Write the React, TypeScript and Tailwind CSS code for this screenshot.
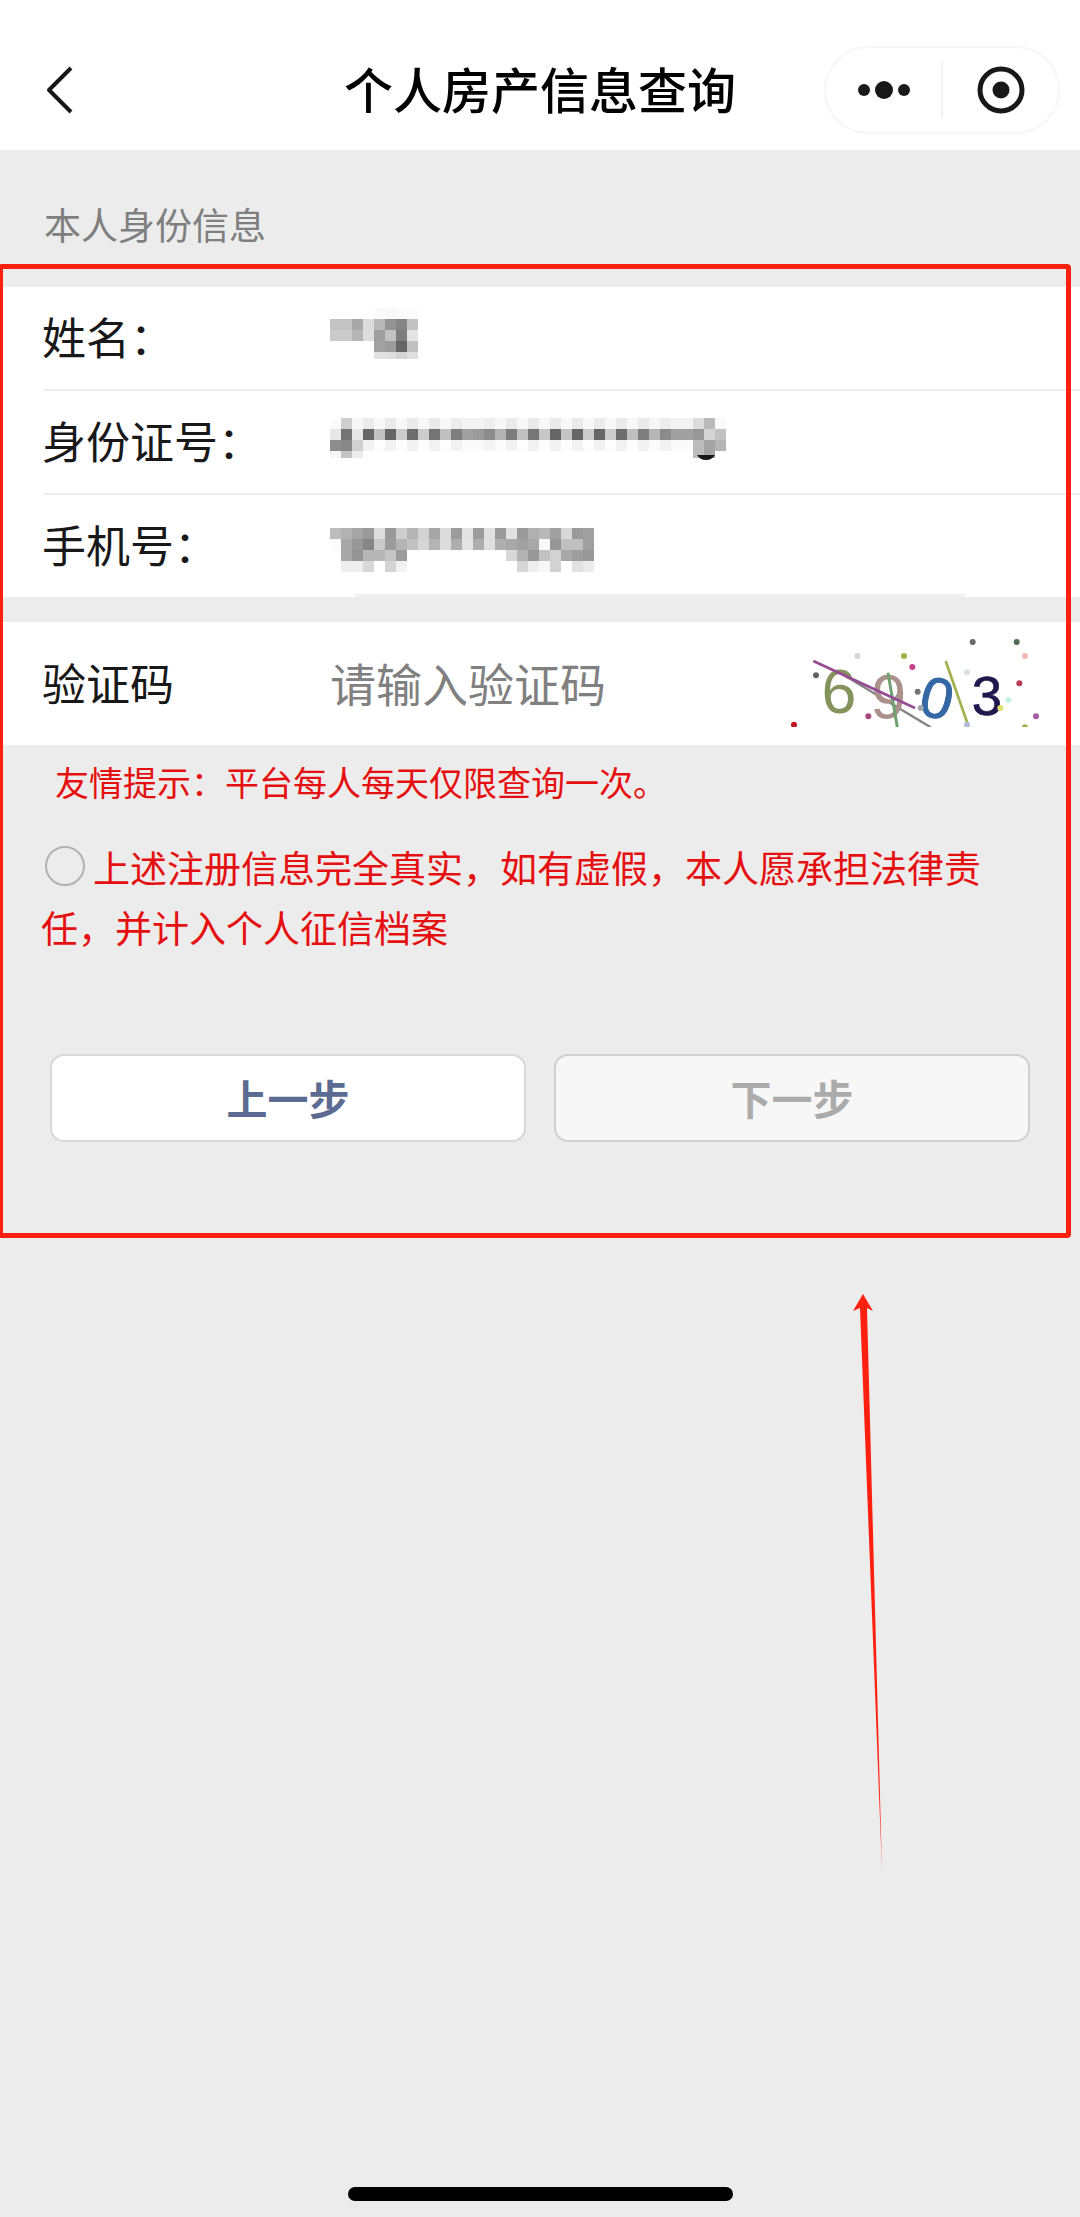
import { useState } from "react";

const CELL = 11;

// grey level of every mosaic block, row by row ("--" leaves the block empty)
const nameMask = [
  "-- -- -- -- fa f8 fb fb",
  "c3 c3 a8 dc b9 94 86 c2",
  "ca ca b5 dd 9e c2 7e e3",
  "-- -- -- -- a1 9b 66 c0",
  "-- -- -- -- e2 de d3 df",
];

const idMask = [
  "fb cf f7 ea f8 ea f8 ea f8 ea f8 ec f3 f3 ee f6 ea f8 ea f8 ea f8 ea f8 ea f8 ea f8 ea f6 ec f3 f3 dc ba fa",
  "e8 74 e6 66 c2 66 cc 6d cc 74 c0 7e a0 9a 8c b2 7c c0 76 c6 66 c4 66 cc 66 cc 6d bf 7e b6 8b a0 a0 98 d4 c2",
  "8e 88 d0 f2 fd f2 fd f2 fd f2 fd f2 fa fa f4 fc f2 fd f2 fd f2 fd f2 fd f2 fd f2 fd f2 fb f2 fa fa bc a4 b4",
  "f6 c4 ec -- -- -- -- -- -- -- -- -- -- -- -- -- -- -- -- -- -- -- -- -- -- -- -- -- -- -- -- -- -- bc a6 --",
];

const phoneMask = [
  "bc b2 a6 9a de 9a ce b4 d2 a6 dc 9c e3 9c e0 9a e2 9a b0 b8 a0 d8 9a a0",
  "fc a8 98 86 ca 9c b4 c2 d6 b4 dc ae e4 ae e0 ae a8 a0 a8 f8 96 c0 c0 a0",
  "-- a8 94 b6 b6 c6 9c -- -- -- -- -- -- -- -- -- d8 b2 98 c2 d2 a8 9e 98",
  "-- ee ee d8 -- d4 f2 -- -- -- -- -- -- -- -- -- -- d6 ee f8 d2 -- e2 ec",
];

const rows = [
  { label: "姓名：", mask: nameMask, top: 3, lastHeight: 7 },
  { label: "身份证号：", mask: idMask, top: 9, lastHeight: 7 },
  { label: "手机号：", mask: phoneMask, top: 15, lastHeight: 11 },
];

const captchaDots = [
  { x: 638, y: 186, color: "#666a6a" },
  { x: 770, y: 186, color: "#4f6a55" },
  { x: 292, y: 228, color: "#d3dad8" },
  { x: 432, y: 228, color: "#a3b03c" },
  { x: 795, y: 228, color: "#f6b9b0" },
  { x: 457, y: 261, color: "#c8418c" },
  { x: 621, y: 277, color: "#d8e2e0" },
  { x: 168, y: 286, color: "#5f6468" },
  { x: 778, y: 310, color: "#b83a5a" },
  { x: 473, y: 335, color: "#757575" },
  { x: 745, y: 359, color: "#c4f3e2" },
  { x: 482, y: 384, color: "#a6a6ac" },
  { x: 721, y: 384, color: "#e3e070" },
  { x: 325, y: 409, color: "#ad4a7c" },
  { x: 828, y: 409, color: "#a85aa6" },
  { x: 102, y: 434, color: "#c4141e" },
  { x: 621, y: 434, color: "#b0bcd4" },
  { x: 795, y: 442, color: "#a3b04f" },
];

function Mosaic({
  mask,
  top,
  lastHeight,
  children,
}: {
  mask: string[];
  top: number;
  lastHeight: number;
  children?: React.ReactNode;
}) {
  return (
    <svg width="400" height="66" aria-hidden="true" shapeRendering="crispEdges">
      {mask.map((line, r) =>
        line.split(" ").map((level, c) =>
          level === "--" ? null : (
            <rect
              key={`${r}-${c}`}
              x={c * CELL}
              y={top + r * CELL}
              width={CELL}
              height={r === mask.length - 1 ? lastHeight : CELL}
              fill={`#${level}${level}${level}`}
            />
          )
        )
      )}
      {children}
    </svg>
  );
}

function Captcha() {
  return (
    <svg
      width="258"
      height="87"
      viewBox="90 180 774 261"
      className="shrink-0 overflow-visible"
      fontFamily="'Liberation Sans', Arial, sans-serif"
      textAnchor="middle"
    >
      <clipPath id="captcha-area">
        <rect x="90" y="170" width="774" height="271" />
      </clipPath>
      <text x="237" y="400" fontSize="188" fill="#84945c">6</text>
      <line x1="235" y1="275" x2="512" y2="442" stroke="#858585" strokeWidth="7" clipPath="url(#captcha-area)" />
      <text x="386" y="415" fontSize="188" fill="#ab918c" transform="rotate(3 386 348)">9</text>
      <text x="531" y="414" fontSize="172" fill="#3468a4" stroke="#3468a4" strokeWidth="3" transform="rotate(14 531 356)">0</text>
      <text x="681" y="405" fontSize="164" fill="#1e184c" stroke="#1e184c" strokeWidth="2">3</text>
      <g clipPath="url(#captcha-area)">
        <line x1="384" y1="278" x2="412" y2="442" stroke="#6fa06f" strokeWidth="9" />
        <line x1="160" y1="243" x2="465" y2="384" stroke="#964a93" strokeWidth="8" />
        <line x1="557" y1="243" x2="623" y2="432" stroke="#a3b04f" strokeWidth="8" />
        {captchaDots.map((dot) => (
          <circle key={`${dot.x}-${dot.y}`} cx={dot.x} cy={dot.y} r="9" fill={dot.color} />
        ))}
      </g>
    </svg>
  );
}

export default function App() {
  const [code, setCode] = useState("");
  const [agreed, setAgreed] = useState(false);

  return (
    <div className="relative flex min-h-screen flex-col overflow-hidden bg-[#ececec] font-['Noto_Sans_CJK_SC',sans-serif] text-[#181818]">
      {/* ================= NAV BAR ================= */}
      <header className="grid h-[150px] grid-cols-[1fr_auto_1fr] items-center bg-white px-5 pt-[30px]">
        <button type="button" aria-label="返回" className="ml-6 justify-self-start">
          <svg width="32" height="50" viewBox="0 0 32 50" fill="none" stroke="#181818" strokeWidth="4">
            <path d="M27 3 L5 25 L27 47" strokeLinejoin="round" />
          </svg>
        </button>

        <h1 className="pb-1 text-[49px] leading-[60px] font-medium text-black">个人房产信息查询</h1>

        <div className="flex h-[88px] w-[236px] items-center justify-self-end rounded-full border-2 border-[#f6f6f6]">
          <button type="button" aria-label="更多" className="flex flex-1 justify-center">
            <svg width="52" height="20" viewBox="0 0 52 20" fill="#181818">
              <circle cx="6" cy="10" r="6" />
              <circle cx="26" cy="10" r="9" />
              <circle cx="46" cy="10" r="6" />
            </svg>
          </button>
          <div className="h-14 w-0.5 bg-[#f3f3f3]"></div>
          <button type="button" aria-label="关闭" className="flex flex-1 justify-center">
            <svg width="48" height="48" viewBox="0 0 48 48">
              <circle cx="24" cy="24" r="21" fill="none" stroke="#181818" strokeWidth="5" />
              <circle cx="24" cy="24" r="8.5" fill="#181818" />
            </svg>
          </button>
        </div>
      </header>

      <h2 className="px-11 pt-11 pb-2.5 text-[37px] leading-[60px] text-[#7f7f7f]">本人身份信息</h2>

      <main className="relative pt-[23px] pb-24">
        {/* ================= IDENTITY ================= */}
        <dl className="relative bg-white after:absolute after:right-[115px] after:bottom-0 after:left-[355px] after:h-[3px] after:bg-[#f0f0f0]">
          {rows.map((row) => (
            <div key={row.label} className="group">
              <div className="flex h-[102px] items-center pl-[42px]">
                <dt className="w-[288px] pb-1 text-[44px] leading-[60px]">{row.label}</dt>
                <dd>
                  <Mosaic mask={row.mask} top={row.top} lastHeight={row.lastHeight}>
                    {row.mask === idMask && (
                      <path d="M367 46 H385 Q382 51 376 51 Q370 51 367 46 Z" fill="#181818" shapeRendering="auto" />
                    )}
                  </Mosaic>
                </dd>
              </div>
              <div className="ml-11 h-0.5 bg-[#ececec] group-last:hidden"></div>
            </div>
          ))}
        </dl>

        {/* ================= CAPTCHA ================= */}
        <div className="mt-[25px] flex h-[123px] items-center bg-white pr-8 pl-[42px]">
          <label htmlFor="captcha" className="w-[288px] shrink-0 pb-1 text-[44px] leading-[60px]">
            验证码
          </label>
          <input
            id="captcha"
            type="text"
            value={code}
            onChange={(e) => setCode(e.target.value)}
            placeholder="请输入验证码"
            className="h-[72px] min-w-0 flex-1 pb-1 text-[46px] outline-none placeholder:text-[#808080]"
          />
          <Captcha />
        </div>

        {/* ================= AGREEMENT ================= */}
        <div className="px-[41px] pt-[7px] text-[#e60f0f]">
          <p className="pl-3.5 text-[34px] leading-[60px]">友情提示：平台每人每天仅限查询一次。</p>

          <label className="mt-[25px] block text-[37px] leading-[60px]">
            <input
              type="checkbox"
              checked={agreed}
              onChange={(e) => setAgreed(e.target.checked)}
              className="mr-2 ml-1 size-10 appearance-none rounded-full border-2 border-[#b2b2b2] align-[-3px] checked:border-[12px] checked:border-[#07c160]"
            />
            上述注册信息完全真实，如有虚假，本人愿承担法律责任，并计入个人征信档案
          </label>
        </div>

        {/* ================= ACTIONS ================= */}
        <div className="mt-[97px] grid grid-cols-2 gap-7 px-[50px]">
          <button
            type="button"
            className="h-[88px] rounded-[14px] border-2 border-[#d8d8d8] bg-white text-[41px] font-bold text-[#5b6b92]"
          >
            上一步
          </button>
          <button
            type="button"
            disabled={!agreed}
            className="h-[88px] rounded-[14px] border-2 border-[#d0d0d0] bg-white text-[41px] font-bold text-[#5b6b92] disabled:bg-[#f7f7f7] disabled:text-[#ababab]"
          >
            下一步
          </button>
        </div>

        {/* marker frame and arrow over the form */}
        <div className="pointer-events-none absolute inset-y-0 right-[9px] -left-0.5 rounded-[4px] border-[5px] border-[#ff2010]"></div>
        <svg
          width="30"
          height="580"
          viewBox="0 0 30 580"
          fill="#ff2010"
          aria-hidden="true"
          className="pointer-events-none absolute top-full right-[197px] mt-14"
        >
          <path d="M10 0 L20 17 L14 14 L29 577 L7 14 L0 17 Z" />
        </svg>
      </main>

      {/* home indicator */}
      <div className="mx-auto mt-auto mb-4 h-3.5 w-[385px] rounded-full bg-black"></div>
    </div>
  );
}
